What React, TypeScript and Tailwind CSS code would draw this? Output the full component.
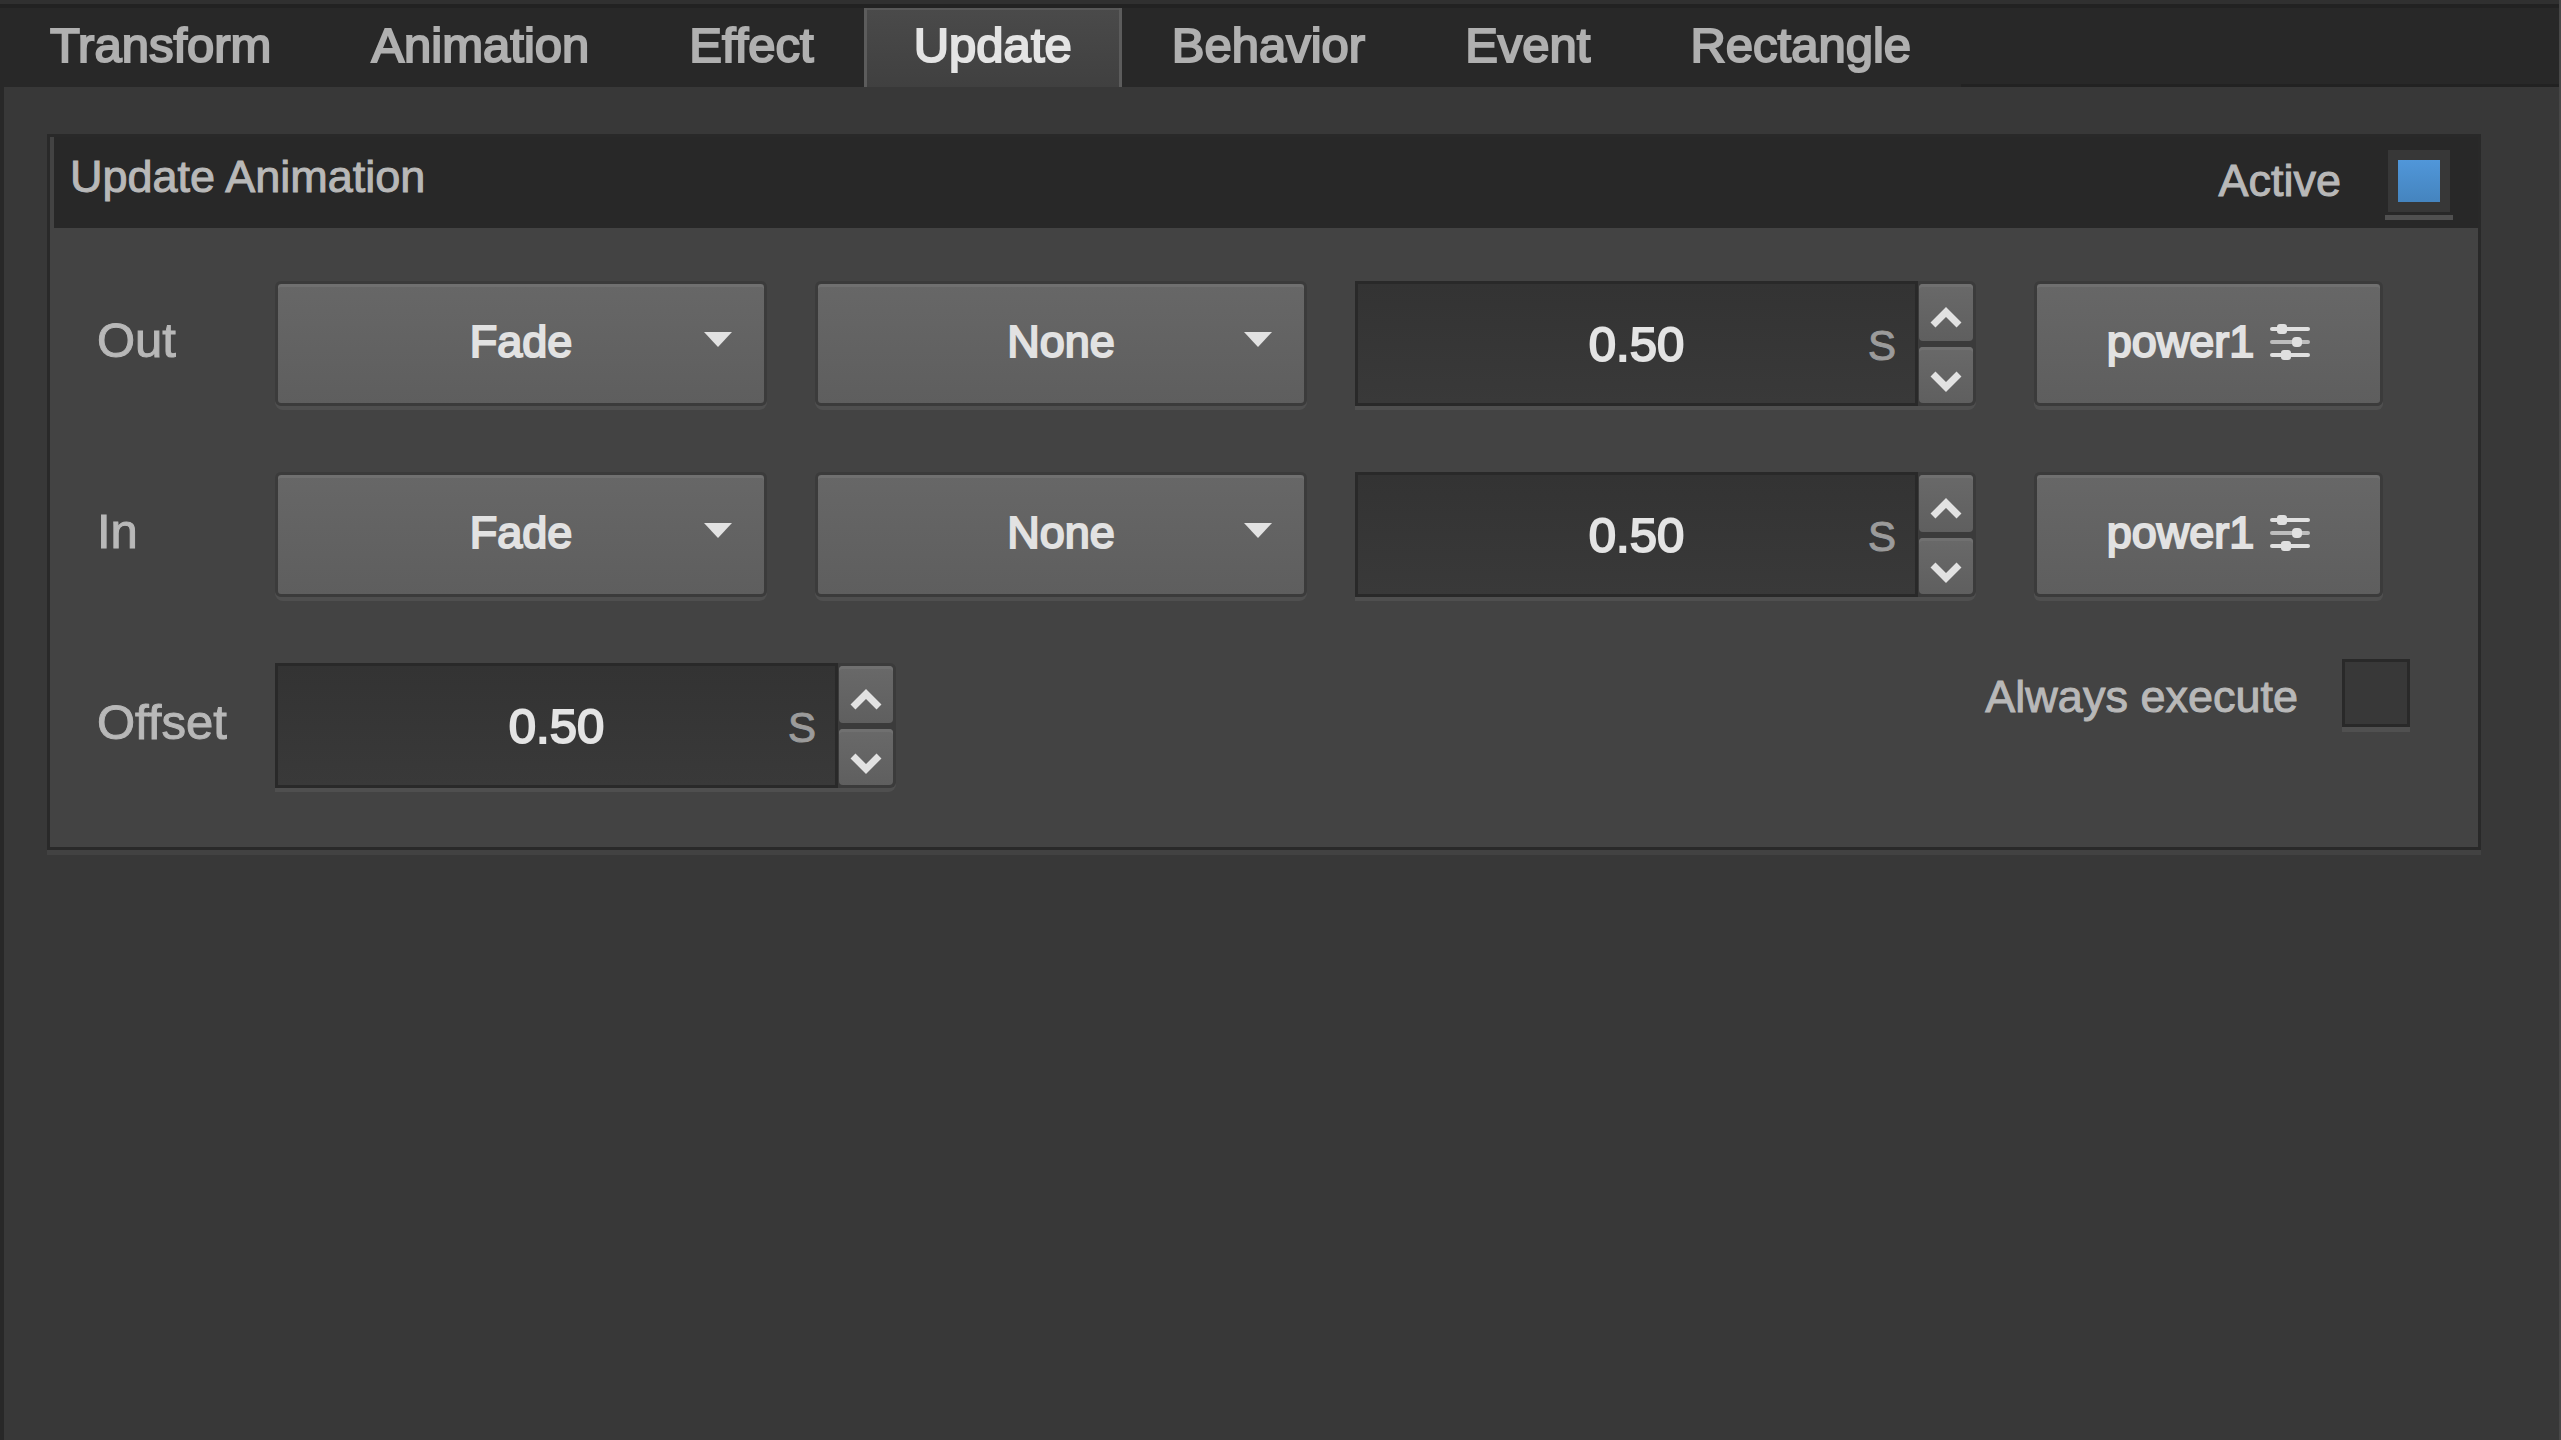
import { useState } from 'react';
import clsx from 'clsx';

const TABS = ['Transform', 'Animation', 'Effect', 'Update', 'Behavior', 'Event', 'Rectangle'];
const EFFECTS = ['Fade', 'Slide', 'Zoom'];
const DIRECTIONS = ['None', 'Left', 'Right'];

const raised =
  'rounded-md border-3 border-[#3b3b3b] bg-linear-to-b from-[#676767] to-[#5e5e5e] text-[45px] text-[#e2e2e2] [-webkit-text-stroke:2px]';

interface SelectProps {
  label: string;
  options: string[];
}

function Select({ label, options }: SelectProps) {
  return (
    <div className="relative min-w-0 flex-[492_1_0px] rounded-lg shadow-[0_4px_0_#4f4f4f]">
      <select
        aria-label={label}
        className={clsx(raised, 'h-[125px] w-full appearance-none pb-1 [text-align-last:center] shadow-[inset_0_3px_0_#707070]')}
      >
        {options.map((option) => (
          <option key={option}>{option}</option>
        ))}
      </select>
      <svg viewBox="0 0 28 15" className="pointer-events-none absolute top-[51px] right-[35px] h-[15px] w-7 fill-[#e2e2e2]">
        <path d="M0 0h28L14 15z" />
      </svg>
    </div>
  );
}

interface SecondsFieldProps {
  id: string;
  label: string;
}

function SecondsField({ id, label }: SecondsFieldProps) {
  const [value, setValue] = useState('0.50');

  const step = (delta: number) => {
    setValue(Math.max(0, Number(value) + delta).toFixed(2));
  };

  return (
    <div className="flex h-[125px] min-w-0 flex-[621_1_0px] rounded-r-lg shadow-[0_4px_0_#4f4f4f]">
      <div className="relative min-w-0 flex-1">
        <input
          id={id}
          aria-label={label}
          inputMode="decimal"
          value={value}
          onChange={(e) => setValue(e.target.value)}
          className="h-full w-full border-3 border-[#292929] bg-linear-to-b from-[#333333] to-[#393939] text-center text-[49px] text-[#e4e4e4] outline-none [-webkit-text-stroke:2px]"
        />
        <span className="pointer-events-none absolute inset-y-0 right-[22px] flex items-center pt-1 text-[42px] text-[#9b9b9b] [-webkit-text-stroke:1px]">
          S
        </span>
      </div>
      <div className="flex w-[58px] flex-col gap-1.5 rounded-r-md bg-[#3b3b3b] py-[3px] pr-[3px] pl-px">
        <StepButton label={`Increase ${label}`} onClick={() => step(0.05)} path="M3 19 16 6l13 13" />
        <StepButton label={`Decrease ${label}`} onClick={() => step(-0.05)} path="M3 5l13 13L29 5" />
      </div>
    </div>
  );
}

interface StepButtonProps {
  label: string;
  path: string;
  onClick: () => void;
}

function StepButton({ label, path, onClick }: StepButtonProps) {
  return (
    <button
      type="button"
      aria-label={label}
      onClick={onClick}
      className="flex flex-1 items-center justify-center rounded-sm bg-linear-to-b from-[#696969] to-[#5f5f5f] pt-3 shadow-[inset_0_3px_0_#707070]"
    >
      <svg viewBox="0 0 32 24" className="h-6 w-8 fill-none stroke-[#e2e2e2] stroke-[7]">
        <path d={path} />
      </svg>
    </button>
  );
}

function EaseButton() {
  return (
    <button
      type="button"
      className={clsx(
        raised,
        'ml-2.5 flex h-[125px] min-w-0 flex-[343_1_0px] items-center justify-center gap-4 pb-1 shadow-[inset_0_3px_0_#707070,0_4px_0_#4f4f4f]'
      )}
    >
      power1
      <svg viewBox="0 0 40 38" className="h-[38px] w-10 fill-[#e0e0e0]">
        <rect x="0" y="4" width="40" height="4" rx="2" />
        <rect x="0" y="17" width="40" height="4" rx="2" className="fill-[#bdbdbd]" />
        <rect x="0" y="30" width="40" height="4" rx="2" />
        <rect x="7" y="1" width="10" height="10" rx="3" />
        <rect x="22" y="14" width="10" height="10" rx="4" />
        <rect x="11" y="27" width="10" height="10" rx="3" />
      </svg>
    </button>
  );
}

interface CheckProps {
  label: string;
  defaultChecked?: boolean;
  className?: string;
}

function Check({ label, defaultChecked, className }: CheckProps) {
  return (
    <label className={clsx('flex gap-11 text-[45px] leading-[60px] text-[#b8b8b8]', className)}>
      <span className="[-webkit-text-stroke:1px]">{label}</span>
      <input
        type="checkbox"
        defaultChecked={defaultChecked}
        className="size-[68px] appearance-none border-3 border-[#292929] bg-[#383838] shadow-[0_5px_0_#505050] checked:border-[#282828] checked:bg-linear-to-b checked:from-[#539be0] checked:to-[#4280b8] checked:bg-clip-content checked:p-2.5 checked:shadow-[0_5px_0_#505050,inset_0_0_0_10px_#373737]"
      />
    </label>
  );
}

function TransitionRow({ name }: { name: string }) {
  return (
    <div className="mr-[27px] flex items-center gap-12">
      <RowLabel>{name}</RowLabel>
      <Select label={`${name} effect`} options={EFFECTS} />
      <Select label={`${name} direction`} options={DIRECTIONS} />
      <SecondsField id={name} label={`${name} duration`} />
      <EaseButton />
    </div>
  );
}

function RowLabel({ children }: { children: string }) {
  return (
    <label htmlFor={children} className="w-[130px] shrink-0 pb-1.5 text-[49px] whitespace-nowrap text-[#b8b8b8] [-webkit-text-stroke:1px]">
      {children}
    </label>
  );
}

export default function App() {
  const [activeTab, setActiveTab] = useState('Update');

  return (
    <div className="min-h-screen border-r-2 border-[#474747] bg-[#383838] font-['Liberation_Sans',Arial,sans-serif]">
      <nav className="flex border-t-4 border-[#303030] bg-[#282828]">
        {TABS.map((tab) => (
          <button
            key={tab}
            type="button"
            onClick={() => setActiveTab(tab)}
            className={clsx(
              'h-[83px] border-t-4 border-[#222222] text-[49px] [-webkit-text-stroke:2px]',
              tab === activeTab ? 'text-[#e4e4e4]' : 'text-[#b0b0b0]'
            )}
          >
            <span
              className={clsx(
                'flex h-full items-center border-x-3 px-[47px] pb-1',
                tab === activeTab ? 'border-[#5c5c5c] bg-linear-to-b from-[#4a4a4a] to-[#404040] shadow-[inset_0_2px_0_#585858]' : 'border-transparent'
              )}
            >
              {tab}
            </span>
          </button>
        ))}
        <div className="flex-1 border-t-4 border-b-3 border-[#222222]" />
      </nav>

      <main className="min-h-[calc(100vh-87px)] border-l-4 border-[#282828] pt-[47px] pr-[78px] pl-[43px]">
        <section className="border-3 border-[#292929] bg-[#434343] shadow-[0_5px_0_#424242]">
          <header className="ml-1 flex h-[91px] items-center justify-between bg-[#282828] pr-[25px] pb-1 pl-4">
            <h2 className="pb-2 text-[45px] leading-none text-[#b8b8b8] [-webkit-text-stroke:1px]">Update Animation</h2>
            <Check label="Active" defaultChecked className="items-center" />
          </header>
          <div className="flex flex-col gap-[66px] pt-[53px] pr-[68px] pb-[59px] pl-[47px]">
            <TransitionRow name="Out" />
            <TransitionRow name="In" />
            <div className="flex items-center gap-12">
              <RowLabel>Offset</RowLabel>
              <SecondsField id="Offset" label="Offset" />
              <div className="-mt-1 flex flex-[1466_1_0px] justify-end self-start">
                <Check label="Always execute" className="items-end" />
              </div>
            </div>
          </div>
        </section>
      </main>
    </div>
  );
}
